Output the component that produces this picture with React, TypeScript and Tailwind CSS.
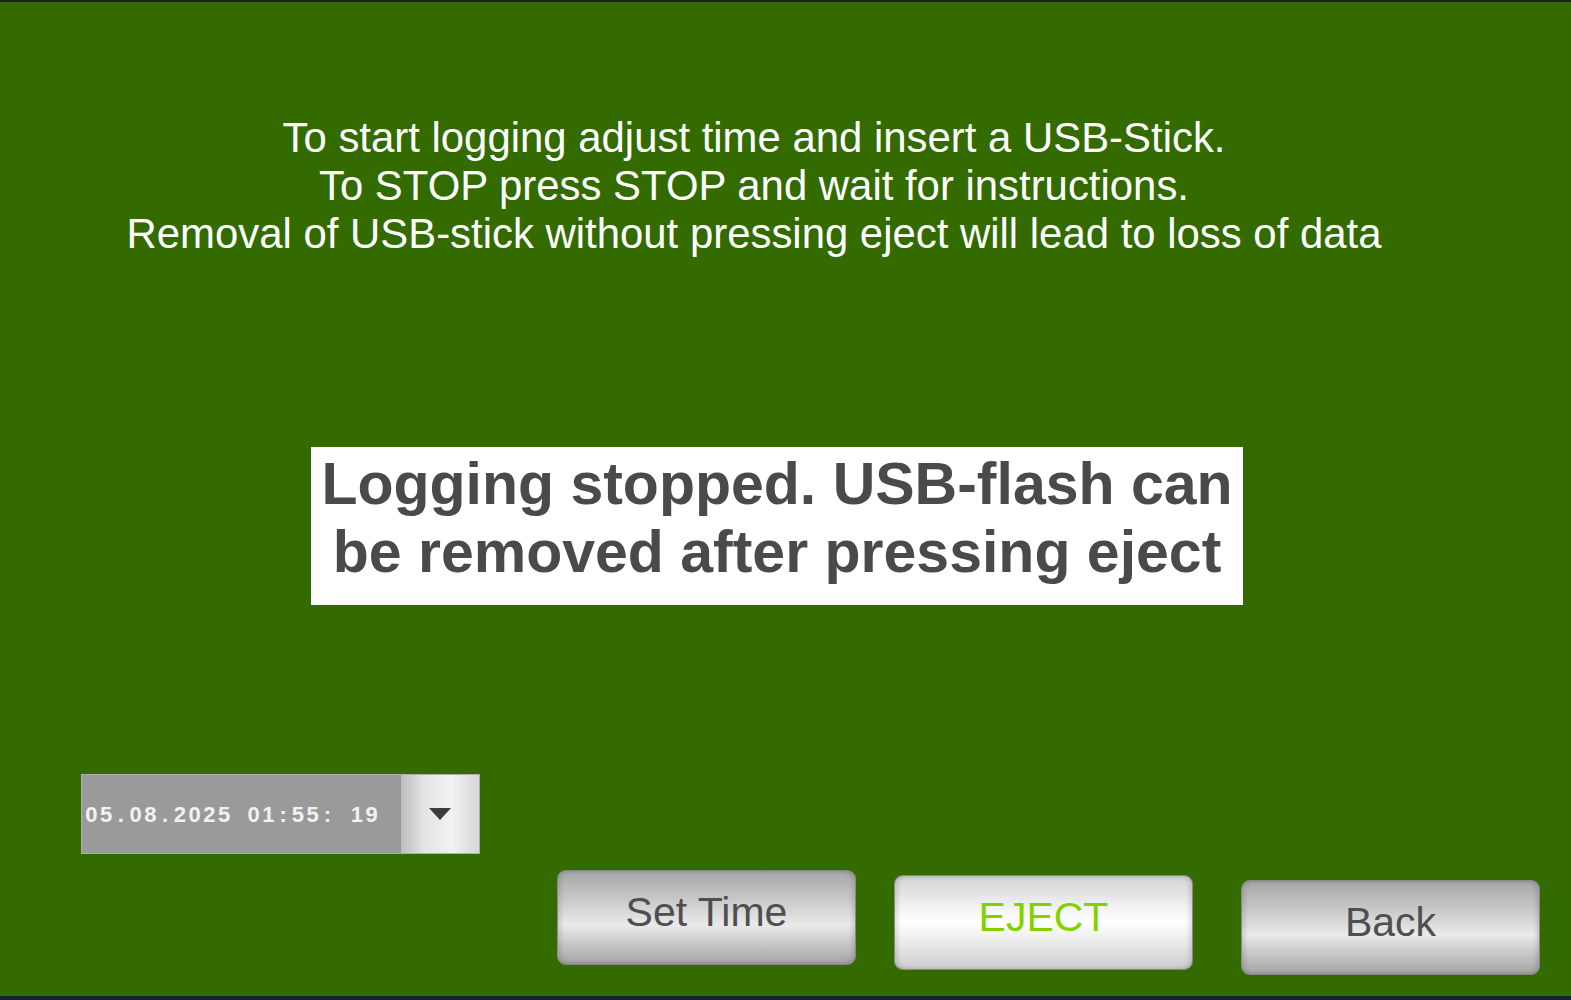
const DATE_TEXT = '05.08.2025 01:55: 19'

function DateTimeBox() {
  return (
    <div className="ml-[81px] flex h-[80px] w-[399px] border border-[#b3aab3] bg-[#9a9a9a]">
      <div className="flex flex-1 items-center pl-[2px] font-['Liberation_Sans',Arial,sans-serif] text-[22px] font-bold text-[#f2f2f2]">
        {DATE_TEXT.split('').map((ch, i) => (
          <span key={i} className="inline-block w-[14.75px] text-center">
            {ch === ' ' ? '\u00a0' : ch}
          </span>
        ))}
      </div>
      <div className="flex w-[78px] items-center justify-center bg-[linear-gradient(to_right,#bcbcbc_0%,#e4e4e4_30%,#f2f2f2_65%,#d6d6d6_100%)]">
        <svg width="24" height="14" viewBox="0 0 24 14">
          <path d="M1 1 L23 1 L12 13 Z" fill="#3b3b3b" />
        </svg>
      </div>
    </div>
  )
}

interface PanelButtonProps {
  label: string
  variant?: 'gray' | 'light'
  className?: string
}

function PanelButton({ label, variant = 'gray', className = '' }: PanelButtonProps) {
  const bg =
    variant === 'light'
      ? 'bg-[linear-gradient(to_bottom,#d2d2d2_0%,#f4f4f4_35%,#ffffff_50%,#ececec_70%,#cdcdcd_100%)] text-[#86d000]'
      : 'bg-[linear-gradient(to_bottom,#a6a6a6_0%,#c8c8c8_30%,#eaeaea_58%,#c4c4c4_80%,#a4a4a4_100%)] text-[#4f4f4f]'
  return (
    <button
      className={`flex h-[95px] w-[299px] items-center justify-center rounded-[9px] border border-[#8a8a8a] pb-[10px] font-['Liberation_Sans',Arial,sans-serif] text-[41px] leading-none shadow-[inset_3px_0_4px_rgba(0,0,0,0.12),inset_-3px_0_4px_rgba(0,0,0,0.12)] ${bg} ${className}`}
    >
      {label}
    </button>
  )
}

export default function App() {
  return (
    <div className="flex h-[1000px] w-[1571px] flex-col overflow-hidden border-t-2 border-b-4 border-[#1b2031] bg-[#346b00] font-['Liberation_Sans',Arial,sans-serif]">
      {/* Instructions */}
      <div className="mt-[112px] w-[1508px] text-center text-[41.9px] leading-[48px] text-white">
        <p>To start logging adjust time and insert a USB-Stick.</p>
        <p>To STOP press STOP and wait for instructions.</p>
        <p>Removal of USB-stick without pressing eject will lead to loss of data</p>
      </div>

      {/* Status message */}
      <div className="ml-[311px] mt-[189px] w-[932px] bg-white pt-[3px] pb-[19px] text-center text-[59px] font-bold leading-[68px] text-[#4a4a4a]">
        <span className="block">Logging stopped. USB-flash can</span>
        <span className="block">be removed after pressing eject</span>
      </div>

      {/* Date / time */}
      <div className="mt-[169px]">
        <DateTimeBox />
      </div>

      {/* Buttons */}
      <div className="mt-[16px] flex items-start pl-[557px]">
        <PanelButton label="Set Time" />
        <PanelButton label="EJECT" variant="light" className="ml-[38px] mt-[5px]" />
        <PanelButton label="Back" className="ml-[48px] mt-[10px]" />
      </div>
    </div>
  )
}
